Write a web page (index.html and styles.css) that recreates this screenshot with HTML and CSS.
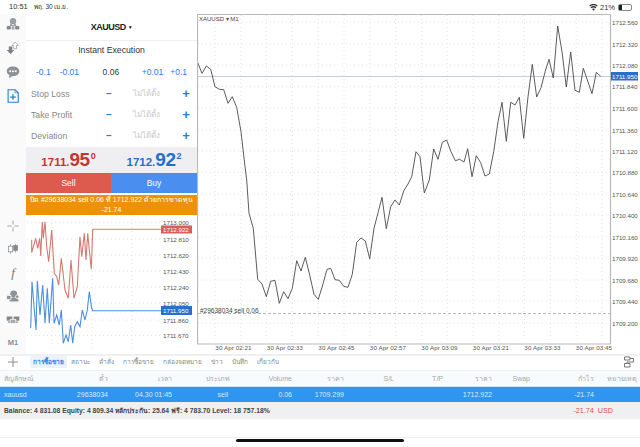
FILE: index.html
```html
<!DOCTYPE html>
<html lang="en">
<head>
    <meta charset="UTF-8">
    <title>XAUUSD Trade</title>
    <link rel="stylesheet" href="styles.css">
</head>
<body>

<div class="statusbar">
    <div class="status-left"><span>10:51</span><span class="status-date">พฤ. 30 เม.ย.</span></div>
    <div class="status-right">
        <svg class="wifi" width="9" height="7" viewBox="0 0 11 8"><path d="M5.5 8 L3.7 5.8 A3 3 0 0 1 7.3 5.8 Z M2.9 4.9 L1.9 3.7 A5.6 5.6 0 0 1 9.1 3.7 L8.1 4.9 A4.2 4.2 0 0 0 2.9 4.9 Z M1.2 2.9 L0.2 1.8 A8.2 8.2 0 0 1 10.8 1.8 L9.8 2.9 A6.8 6.8 0 0 0 1.2 2.9 Z" fill="#333"/></svg>
        <span>21%</span>
        <span class="battery"><span class="battery-fill"></span></span>
    </div>
</div>

<div class="main">
    <div class="rail">
        <div class="rail-group rail-top">
            <svg viewBox="0 0 20 20"><circle cx="10" cy="6" r="4.500" fill="#9a9ea2"/><path d="M6.500 9 L10 12 L13.500 9 L15 13 H5 Z" fill="#9a9ea2"/><rect x="1" y="13" width="6" height="5" rx="1.500" fill="#85888c"/><rect x="8" y="13" width="4" height="5" fill="#a8abae"/><rect x="13" y="13" width="6" height="5" rx="1.500" fill="#85888c"/></svg>
            <svg viewBox="0 0 20 20"><path d="M4 8 H9 V13 H12 L6.500 19 L1 13 H4 Z" fill="#808286"/><path d="M11 11 V6.500 H8.500 L13 1.500 L17.500 6.500 H15 V11 Z" fill="#fff" stroke="#96999c" stroke-width="1"/></svg>
            <svg viewBox="0 0 20 20"><path d="M10 2 C15.500 2 19 5 19 9 C19 13 15.500 16 10 16 L8.500 16 L4 19 L5 14.500 C2.500 13.200 1 11.200 1 9 C1 5 4.500 2 10 2 Z" fill="#8f9295"/><circle cx="6" cy="9" r="1.400" fill="#fff"/><circle cx="10" cy="9" r="1.400" fill="#fff"/><circle cx="14" cy="9" r="1.400" fill="#fff"/></svg>
            <svg viewBox="0 0 20 20"><path d="M3 1 H13 L17.500 5.500 V19 H3 Z" fill="none" stroke="#2a7de1" stroke-width="1.600"/><path d="M13 1 V5.500 H17.500" fill="none" stroke="#2a7de1"/><path d="M10 7.500 V15.500 M6 11.500 H14" stroke="#2a7de1" stroke-width="1.800"/></svg>
        </div>
        <div class="rail-group rail-bottom">
            <svg viewBox="0 0 20 20"><path d="M10 2 V8 M10 12 V18 M2 10 H8 M12 10 H18" stroke="#a0a3a6" stroke-width="1.400"/></svg>
            <svg viewBox="0 0 20 20"><path d="M6.500 3 V17" stroke="#85888b"/><rect x="3.500" y="6" width="6" height="8" fill="#fff" stroke="#85888b"/><path d="M13.500 3 V15" stroke="#85888b"/><rect x="11" y="5" width="5.500" height="7" fill="#85888b" stroke="#85888b"/></svg>
            <div class="rail-f">f</div>
            <svg viewBox="0 0 20 20"><circle cx="11" cy="7" r="5" fill="#8f9295"/><path d="M5 18 C5 13 8 12 11 12 C14 12 18 13 18 18 Z" fill="#8f9295"/><rect x="1" y="9" width="6" height="6" fill="#8f9295" stroke="#fff"/><circle cx="16" cy="11" r="2.500" fill="#8f9295" stroke="#fff"/></svg>
            <svg viewBox="0 0 20 20"><rect x="1" y="5" width="8" height="6" fill="#85888b"/><rect x="11" y="5" width="8" height="6" fill="#85888b"/><rect x="6" y="9" width="8" height="6" fill="#a8abae" stroke="#fff"/><path d="M3 13 H6 M14 13 H17" stroke="#85888b" stroke-width="1.500"/></svg>
            <div class="rail-m1">M1</div>
        </div>
    </div>

    <div class="panel">
        <div class="symbol">XAUUSD <span class="symbol-caret">▼</span></div>
        <div class="order-form">
            <div class="order-type">Instant Execution</div>
            <div class="volume-row">
                <span class="step">-0.1</span><span class="step">-0.01</span>
                <span class="volume">0.06</span>
                <span class="step">+0.01</span><span class="step">+0.1</span>
            </div>
            <div class="field-row">
                <span class="field-name">Stop Loss</span><span class="field-minus">−</span><span class="field-value">ไม่ได้ตั้ง</span><span class="field-plus">+</span>
            </div>
            <div class="field-row">
                <span class="field-name">Take Profit</span><span class="field-minus">−</span><span class="field-value">ไม่ได้ตั้ง</span><span class="field-plus">+</span>
            </div>
            <div class="field-row">
                <span class="field-name">Deviation</span><span class="field-minus">−</span><span class="field-value">ไม่ได้ตั้ง</span><span class="field-plus">+</span>
            </div>
        </div>
        <div class="quotes">
            <div class="quote quote-sell">1711.<b>95</b><sup>0</sup></div>
            <div class="quote quote-buy">1712.<b>92</b><sup>2</sup></div>
        </div>
        <div class="actions">
            <div class="action action-sell">Sell</div>
            <div class="action action-buy">Buy</div>
        </div>
        <div class="notice">ปิด #29638034 sell 0.06 ที่ 1712.922 ด้วยการขาดทุน<br>-21.74</div>
        <svg class="tick-chart" viewBox="27 215 170 135">
            <g class="grid-dots">
                <path d="M27 222.500H160M27 239H160M27 255H160M27 271H160M27 287H160M27 303H160M27 320H160M27 335.500H160"/>
                <path d="M52 215V350M92 215V350M132 215V350"/>
            </g>
            <polyline class="tick-ask" points="31.7,240 31.7,252.7 35.7,238.3 37.7,248.3 39.7,238.3 40.7,256 42.3,221.7 43.3,238.3 45,221.7 46.7,246.7 48.7,261.7 51.7,230 54.3,273.3 56.7,276.7 58.7,285 61.3,258.3 65,290 68.3,298.3 71,260 74,298.3 77.3,286.7 80,236.7 81.7,256.7 84.3,233.3 86,260 87.7,233.3 89.3,250 91.3,269.3 92.7,229.3 161,229.3"/>
            <polyline class="tick-bid" points="30.7,328.3 32,281.7 36,330 37.3,280.7 40,315 42.7,285 45,323.3 47.3,288.3 49.3,323.3 52.7,278.3 54,323.3 56.7,315 59.3,325 61.3,310 63.3,343.3 66,335 68.3,341.7 70.7,325 72.7,343.3 74.7,326.7 77.3,321.7 80,326.7 82.3,310 85,320 87.3,310 89.3,291.7 91.7,308.3 92.7,310.7 161,310.7"/>
            <g class="axis-text">
                <text x="163" y="224.500">1713.000</text>
                <text x="163" y="241.500">1712.810</text>
                <text x="163" y="257.500">1712.620</text>
                <text x="163" y="273.500">1712.430</text>
                <text x="163" y="289.500">1712.240</text>
                <text x="163" y="305.500">1712.050</text>
                <text x="163" y="322.500">1711.860</text>
                <text x="163" y="338">1711.670</text>
            </g>
            <rect x="161" y="225.500" width="31" height="8" fill="#d9605a"/>
            <text class="axis-tag" x="163" y="232">1712.922</text>
            <rect x="161" y="306" width="31" height="9" fill="#2c6fc9"/>
            <text class="axis-tag" x="163" y="313">1711.950</text>
        </svg>
    </div>

    <svg class="chart" viewBox="197 14 443 340">
        <g class="grid-dots">
            <path d="M198 22H610M198 44H610M198 65H610M198 86.500H610M198 108H610M198 130H610M198 151H610M198 172.500H610M198 194H610M198 215H610M198 237H610M198 258H610M198 280H610M198 301H610M198 323H610"/>
            <path d="M215 15V343M240.800 15V343M266.600 15V343M292.400 15V343M318.200 15V343M344 15V343M369.800 15V343M395.600 15V343M421.400 15V343M447.200 15V343M473 15V343M498.800 15V343M524.600 15V343M550.400 15V343M576.200 15V343M602 15V343"/>
        </g>
        <line x1="198" y1="76.500" x2="610" y2="76.500" stroke="#c6ccd3"/>
        <line class="order-line" x1="198" y1="313.500" x2="610" y2="313.500"/>
        <polyline class="price-line" points="197.7,62.7 202,73.3 206.3,66 210.7,69.3 215,86.7 219.3,89.3 223.7,89.7 228,103.3 232.3,96.7 236.7,107.3 241,131.7 245,166.7 246.7,180 249,213.3 253.3,228.3 257.7,279.3 262,284 266.3,296.7 270.7,281.3 275,280.3 279.3,303.3 283.7,291.7 288,298.7 292.3,288.3 296.7,260.7 301,271 305.3,257.3 309.7,275 314,294.3 318.3,299.3 322.7,285 327,269.3 330.7,268.3 335,279.7 339.3,280.3 343.7,286.3 348,287.3 352.3,274.3 356.7,242.3 361,238 365.3,241 369.7,258.7 374,228.3 378.3,211.7 382,197.3 386.3,228.7 390.7,206.7 395,200 399.3,205 403.7,191 408,184 411.7,176.7 416,151.7 420,156.7 424.3,193 429.3,180 433.7,149 438,159.3 442.3,142.3 446.7,140 451,151.7 455.3,160.7 459.7,159.3 464,162 467.7,148.7 472,176.7 476.3,155.7 480.7,162.7 485,176 489.3,174 493.7,151.7 498,121.7 502,102.3 506.3,141.3 510.7,102.3 515,105 519.3,97.3 523.7,138.3 528,96.7 532.3,64.3 536.7,97 541,87.7 545.3,71 549,59.3 553.3,78 557.7,26 562,51.7 566.3,87 570.7,52 575,90.3 579.3,92.3 583.3,68.3 587.7,81 592,93.7 596.3,72.3 600.7,76.3"/>
        <path class="chart-frame" d="M197.500 344V14.500H610.500V344Z"/>
        <text class="chart-title" x="199" y="21">XAUUSD ▾ M1</text>
        <text class="chart-note" x="200" y="313">#29638034 sell 0.06</text>
        <g class="axis-text">
            <text x="612" y="24.500">1712.560</text>
            <text x="612" y="46.500">1712.320</text>
            <text x="612" y="67.500">1712.080</text>
            <text x="612" y="89">1711.840</text>
            <text x="612" y="110.500">1711.600</text>
            <text x="612" y="132.500">1711.360</text>
            <text x="612" y="153.500">1711.120</text>
            <text x="612" y="175">1710.880</text>
            <text x="612" y="196.500">1710.640</text>
            <text x="612" y="217.500">1710.400</text>
            <text x="612" y="239.500">1710.160</text>
            <text x="612" y="260.500">1709.920</text>
            <text x="612" y="282.500">1709.680</text>
            <text x="612" y="303.500">1709.440</text>
            <text x="612" y="325.500">1709.200</text>
        </g>
        <rect x="611" y="72" width="27" height="8.500" fill="#2c6fc9"/>
        <text class="axis-tag" x="612" y="78.800">1711.950</text>
        <g class="axis-text time-text">
            <text x="233.500" y="350">30 Apr 02:21</text>
            <text x="285" y="350">30 Apr 02:33</text>
            <text x="336.500" y="350">30 Apr 02:45</text>
            <text x="388" y="350">30 Apr 02:57</text>
            <text x="439.500" y="350">30 Apr 03:09</text>
            <text x="491" y="350">30 Apr 03:21</text>
            <text x="542.500" y="350">30 Apr 03:33</text>
            <text x="594" y="350">30 Apr 03:45</text>
        </g>
    </svg>
</div>

<div class="tabs">
    <svg class="tabs-add" width="12" height="12" viewBox="0 0 12 12"><path d="M6 1V11M1 6H11" stroke="#8a8d90"/></svg>
    <span class="tab tab-active">การซื้อขาย</span>
    <span class="tab">สถานะ</span>
    <span class="tab">คำสั่ง</span>
    <span class="tab">การซื้อขาย</span>
    <span class="tab">กล่องจดหมาย</span>
    <span class="tab">ข่าว</span>
    <span class="tab">บันทึก</span>
    <span class="tab">เกี่ยวกับ</span>
    <svg class="tabs-layout" width="12" height="12" viewBox="0 0 12 12"><path d="M1.500 1H7V4H1.500Z M1.500 7.500H7V11H1.500Z M7 2.500H10.500V6H4V7.500" fill="none" stroke="#777"/></svg>
</div>

<div class="cols table-head">
    <span>สัญลักษณ์</span><span>ตั๋ว</span><span>เวลา</span><span>ประเภท</span><span>Volume</span><span>ราคา</span><span>S/L</span><span>T/P</span><span>ราคา</span><span>Swap</span><span>กำไร</span><span>หมายเหตุ</span>
</div>
<div class="cols table-row">
    <span>xauusd</span><span>29638034</span><span>04.30 01:45</span><span class="cell-type">sell</span><span>0.06</span><span>1709.299</span><span></span><span></span><span>1712.922</span><span></span><span>-21.74</span><span></span>
</div>
<div class="summary">
    <span>Balance: 4 831.08 Equity: 4 809.34 หลักประกัน: 25.64 ฟรี: 4 783.70 Level: 18 757.18%</span>
    <span class="summary-profit">-21.74 &nbsp;USD</span>
</div>

<div class="home-bar"><div class="home-indicator"></div></div>

</body>
</html>
```

FILE: styles.css
```css
html, body {
    margin: 0;
    padding: 0;
}
body {
    width: 640px;
    height: 447px;
    overflow: hidden;
    background-color: #fff;
    font-family: "Liberation Sans", "Noto Sans", sans-serif;
    color: #333;
}
svg {
    display: block;
}

/* status bar */
.statusbar {
    height: 14px;
    display: flex;
    justify-content: space-between;
    align-items: center;
    padding: 0 8px 0 9px;
    font-size: 7.500px;
}
.status-left {
    display: flex;
    gap: 6px;
}
.status-date {
    font-size: 6.500px;
}
.status-right {
    display: flex;
    align-items: center;
    gap: 2px;
}
.battery {
    width: 12px;
    height: 5px;
    border: 1px solid #888;
    border-radius: 2px;
    display: block;
    margin-left: 1px;
}
.battery-fill {
    display: block;
    width: 3px;
    height: 5px;
    background-color: #222;
}

/* main area */
.main {
    height: 340px;
    display: flex;
}
.rail {
    width: 26px;
    flex-shrink: 0;
    display: flex;
    flex-direction: column;
    justify-content: space-between;
    align-items: center;
    padding: 3px 0 4px;
    background-color: #fafafa;
    box-sizing: border-box;
}
.rail-group {
    display: flex;
    flex-direction: column;
    align-items: center;
}
.rail-group svg, .rail-f, .rail-m1 {
    width: 14px;
    height: 14px;
}
.rail-top {
    gap: 10px;
}
.rail-bottom {
    gap: 9.400px;
}
.rail-f {
    font-family: "Liberation Serif", serif;
    font-style: italic;
    font-size: 13px;
    line-height: 14px;
    text-align: center;
    color: #777;
}
.rail-m1 {
    font-size: 7.500px;
    font-weight: bold;
    line-height: 14px;
    text-align: center;
    color: #8b8f93;
}
.panel {
    width: 171px;
    flex-shrink: 0;
    display: flex;
    flex-direction: column;
    background-color: #fff;
}
.symbol {
    height: 26px;
    line-height: 26px;
    text-align: center;
    font-size: 9px;
    font-weight: bold;
    letter-spacing: -0.500px;
    color: #222;
    border-bottom: 1px solid #eee;
}
.symbol-caret {
    font-size: 5px;
    vertical-align: 1px;
}
.order-form {
    height: 106px;
    display: flex;
    flex-direction: column;
}
.order-type {
    height: 20px;
    line-height: 19px;
    text-align: center;
    font-size: 8.700px;
    color: #333;
}
.volume-row {
    height: 22px;
    display: flex;
    align-items: center;
    font-size: 8.500px;
    padding: 0 10px;
}
.step {
    color: #2a7de1;
    margin-right: 9px;
}
.volume {
    flex: 1;
    text-align: center;
    color: #333;
    padding-right: 8px;
}
.volume + .step {
    margin-right: 7px;
}
.volume-row .step:last-child {
    margin-right: 0;
}
.field-row {
    height: 21px;
    display: grid;
    grid-template-columns: 66px 24px 54px 22px;
    align-items: center;
    padding: 0 0 0 5px;
    font-size: 8.700px;
    white-space: nowrap;
}
.field-name {
    color: #888;
}
.field-minus, .field-plus {
    color: #2a7de1;
    font-weight: bold;
    text-align: center;
}
.field-minus {
    font-size: 10px;
}
.field-plus {
    font-size: 13px;
}
.field-value {
    color: #c8c8c8;
    font-size: 8px;
    text-align: center;
    padding-right: 4px;
}
.quotes {
    height: 26px;
    display: grid;
    grid-template-columns: 85px 1fr;
    background-color: #efeff1;
}
.quote {
    text-align: center;
    font-size: 11.500px;
    font-weight: bold;
    line-height: 26px;
    white-space: nowrap;
}
.quote b {
    font-size: 19px;
    letter-spacing: -0.500px;
}
.quote sup {
    font-size: 9px;
    line-height: 0;
    vertical-align: 7px;
    margin-left: 1px;
}
.quote-sell {
    color: #c8342e;
}
.quote-buy {
    color: #1f6fd0;
}
.actions {
    height: 20px;
    display: grid;
    grid-template-columns: 85px 1fr;
}
.action {
    line-height: 20px;
    text-align: center;
    font-size: 8.500px;
    color: #fff;
}
.action-sell {
    background-color: #dc5a4e;
}
.action-buy {
    background-color: #4a8ff0;
}
.notice {
    height: 20px;
    margin-top: 2px;
    background-color: #ee9106;
    color: #fff;
    font-size: 7px;
    line-height: 10px;
    text-align: center;
    white-space: nowrap;
    overflow: hidden;
}
.tick-chart {
    width: 170px;
    height: 135px;
    margin-left: 1px;
}
.chart {
    width: 443px;
    height: 340px;
    flex-shrink: 0;
}

/* chart parts */
.grid-dots path {
    fill: none;
    stroke: #e4e4e4;
    stroke-width: 1;
    stroke-dasharray: 1 3;
}
.chart-frame {
    fill: none;
    stroke: #b9b9b9;
    stroke-width: 1.200;
}
.price-line {
    fill: none;
    stroke: #4a4a4a;
    stroke-width: 0.900;
}
.order-line {
    stroke: #888;
    stroke-width: 0.600;
    stroke-dasharray: 3 2;
}
.tick-ask {
    fill: none;
    stroke: #d47a72;
    stroke-width: 1.100;
}
.tick-bid {
    fill: none;
    stroke: #4c8fe0;
    stroke-width: 1.100;
}
.axis-text text {
    font-size: 6.200px;
    fill: #555;
}
.time-text text {
    text-anchor: middle;
    letter-spacing: 0.100px;
}
.axis-tag {
    font-size: 6.200px;
    fill: #fff;
}
.chart-title {
    font-size: 6px;
    fill: #444;
}
.chart-note {
    font-size: 6.500px;
    fill: #444;
}

/* tabs */
.tabs {
    height: 17px;
    display: flex;
    align-items: center;
    gap: 9px;
    font-size: 6.500px;
    color: #888;
    padding: 0 5px 2px 7px;
    border-top: 2px solid #f0f0f0;
    border-bottom: 1px solid #eef0f2;
    box-sizing: border-box;
}
.tabs-add {
    margin-right: 2px;
}
.tab {
    white-space: nowrap;
}
.tab-active {
    background-color: #eaf3fb;
    color: #2a7de1;
    font-weight: bold;
    padding: 1px 3px;
    border-radius: 2px;
    margin-right: -5px;
}
.tabs-layout {
    margin-left: auto;
}

/* trades table */
.cols {
    display: grid;
    grid-template-columns: 60px 48px 64px 58px 62px 52px 50px 49px 49px 38px 64px 43px;
    font-size: 7px;
    text-align: right;
    align-items: center;
    white-space: nowrap;
}
.cols span:first-child {
    text-align: left;
    padding-left: 4px;
}
.table-head {
    height: 16px;
    background-color: #f7fbfe;
    color: #a4a8ac;
    border-bottom: 1px solid #cfe6f7;
    box-sizing: border-box;
}
.table-row {
    height: 15px;
    background-color: #2e96f0;
    color: #d6eafc;
}
.cell-type {
    padding-right: 2px;
}
.summary {
    height: 17px;
    display: flex;
    align-items: center;
    justify-content: space-between;
    padding: 0 27px 0 4px;
    background-color: #eff0f2;
    font-size: 6.750px;
    font-weight: bold;
    color: #444;
}
.summary-profit {
    color: #d9534f;
    font-weight: normal;
    font-size: 7.200px;
}
.home-bar {
    height: 28px;
    display: flex;
    justify-content: center;
    padding-top: 18px;
    box-sizing: border-box;
    background: linear-gradient(#fff 18px, #eee 18px, #eee 19px, #fff 19px);
}
.home-indicator {
    width: 168px;
    height: 3px;
    margin-top: 2px;
    border-radius: 2px;
    background-color: #111;
}
```
